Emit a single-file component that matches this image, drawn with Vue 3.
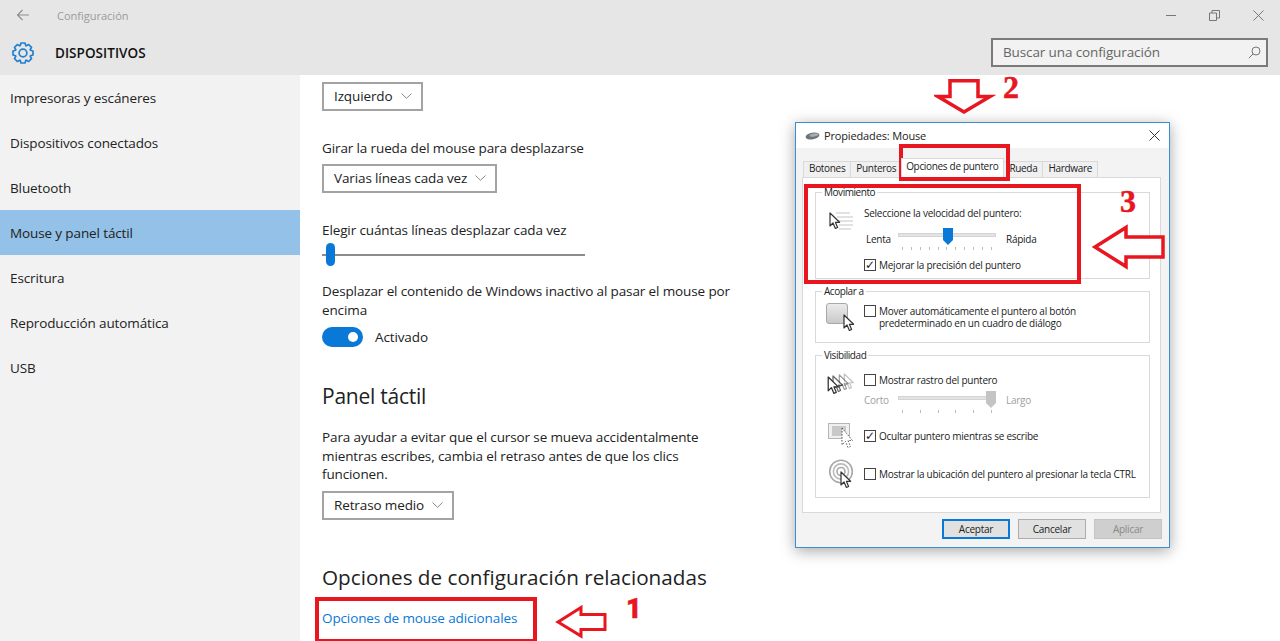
<script setup>
const rawItems = ['Impresoras y escáneres','Dispositivos conectados','Bluetooth','Mouse y panel táctil','Escritura','Reproducción automática','USB']
const tabs = ['Botones','Punteros','Opciones de puntero','Rueda','Hardware']
const ticks = Array.from({length:11},(_,i)=>i)
const ticks6 = Array.from({length:6},(_,i)=>i)
function gearPath(){
  const cx=12,cy=12,n=8,ro=10.2,ri=7.9
  let d=''
  for(let i=0;i<n;i++){
    const a=(i*2*Math.PI)/n
    const pts=[[-0.36,ri],[-0.2,ro],[0.2,ro],[0.36,ri]]
    for(const [o,r] of pts){
      const x=cx+r*Math.sin(a+o),y=cy-r*Math.cos(a+o)
      d+=(d?'L':'M')+x.toFixed(2)+' '+y.toFixed(2)
    }
  }
  return d+'Z'
}
const gear=gearPath()
</script>

<template>
  <div class="page">
    <header class="head">
      <div class="row-top">
        <svg class="back" width="14" height="12" viewBox="0 0 14 12"><path d="M13 6H1.500M6.500 1 1.500 6l5 5" fill="none" stroke="#8c8c8c" stroke-width="1.100"/></svg>
        <span class="app">Configuración</span>
        <div class="win">
          <svg width="10" height="10" viewBox="0 0 10 10"><path d="M0 5.500h10" stroke="#777" stroke-width="1"/></svg>
          <svg width="11" height="11" viewBox="0 0 11 11"><path d="M.5 3h7v7.500h-7zM3 3V.5h7.500V8H8" fill="none" stroke="#777"/></svg>
          <svg width="11" height="11" viewBox="0 0 11 11"><path d="M.5.5l10 10M10.500.5l-10 10" stroke="#777"/></svg>
        </div>
      </div>
      <div class="row-sub">
        <svg class="gear" width="24" height="24" viewBox="0 0 24 24"><path :d="gear" fill="none" stroke="#2280cf" stroke-width="1.700" stroke-linejoin="round"/><circle cx="12" cy="12" r="3.900" fill="none" stroke="#2280cf" stroke-width="1.700"/></svg>
        <span class="sect">DISPOSITIVOS</span>
        <div class="search">
          <span>Buscar una configuración</span>
          <svg width="13" height="13" viewBox="0 0 13 13"><circle cx="8" cy="5" r="4" fill="none" stroke="#777"/><path d="M5 8 .8 12.200" stroke="#777"/></svg>
        </div>
      </div>
    </header>

    <div class="body">
      <nav class="side">
        <div v-for="(it,i) in rawItems" :key="it" class="item" :class="{on:i===3}">{{ it }}</div>
      </nav>

      <main class="main">
        <div class="drop d1">Izquierdo<svg class="chev" width="11" height="6" viewBox="0 0 11 6"><path d="M.5.5 5.500 5.300 10.500.5" fill="none" stroke="#888"/></svg></div>
        <p class="lbl l1">Girar la rueda del mouse para desplazarse</p>
        <div class="drop d2">Varias líneas cada vez<svg class="chev" width="11" height="6" viewBox="0 0 11 6"><path d="M.5.5 5.500 5.300 10.500.5" fill="none" stroke="#888"/></svg></div>
        <p class="lbl l2">Elegir cuántas líneas desplazar cada vez</p>
        <div class="slider"><i class="fill"></i><i class="thumb"></i></div>
        <p class="lbl l3">Desplazar el contenido de Windows inactivo al pasar el mouse por encima</p>
        <div class="tog-row"><span class="tog"><i></i></span><span>Activado</span></div>
        <h2 class="h-panel">Panel táctil</h2>
        <p class="lbl l4">Para ayudar a evitar que el cursor se mueva accidentalmente mientras escribes, cambia el retraso antes de que los clics funcionen.</p>
        <div class="drop d3">Retraso medio<svg class="chev" width="11" height="6" viewBox="0 0 11 6"><path d="M.5.5 5.500 5.300 10.500.5" fill="none" stroke="#888"/></svg></div>
        <h2 class="h-rel">Opciones de configuración relacionadas</h2>
        <a class="link">Opciones de mouse adicionales</a>
      </main>
    </div>

    <svg width="0" height="0" class="defs">
      <symbol id="cur" viewBox="0 0 12 18"><path d="M1 1v13l3-3 2.400 5.500 2.200-1L6.400 10.300h4.200z" fill="#fff" stroke="#333" stroke-width="1.200" stroke-linejoin="round"/></symbol>
    </svg>

    <section class="dlg">
      <div class="dlg-title">
        <svg width="15" height="8" viewBox="0 0 15 8"><ellipse cx="7.500" cy="4" rx="7" ry="3.300" transform="rotate(-10 7.500 4)" fill="#6e7478"/><ellipse cx="9" cy="3" rx="4.500" ry="1.500" fill="#a8adb0" transform="rotate(-10 9 3)"/></svg>
        <span>Propiedades: Mouse</span>
        <svg class="dlg-x" width="11" height="11" viewBox="0 0 11 11"><path d="M.5.5l10 10M10.500.5l-10 10" stroke="#333"/></svg>
      </div>
      <div class="dlg-body">
        <div class="tabs">
          <span v-for="(t,i) in tabs" :key="t" class="tab" :class="{act:i===2}">{{ t }}</span>
        </div>
        <div class="panel">
          <fieldset class="fs fs-mov">
            <legend>Movimiento</legend>
            <div class="fs-grid">
              <svg class="ic" width="27" height="26" viewBox="0 0 27 26">
                <path d="M8 7h14M9 11h16M10 15h15M11 19h14M11 23h12" stroke="#c4c4c4"/>
                <use href="#cur" x="1" y="6" width="12" height="18"/>
              </svg>
              <div>
                <div class="d-txt">Seleccione la velocidad del puntero:</div>
                <div class="speed">
                  <span class="s-l">Lenta</span>
                  <div class="mini">
                    <i class="track"></i><i class="mthumb" style="left:45px"></i>
                    <div class="mticks"><i v-for="t in ticks" :key="t"></i></div>
                  </div>
                  <span>Rápida</span>
                </div>
                <label class="chk c-mov"><span class="box">✓</span>Mejorar la precisión del puntero</label>
              </div>
            </div>
          </fieldset>

          <fieldset class="fs fs-aco">
            <legend>Acoplar a</legend>
            <div class="fs-grid">
              <svg class="ic" width="30" height="32" viewBox="0 0 30 32">
                <defs><linearGradient id="btnG" x1="0" y1="0" x2="0" y2="1"><stop offset="0" stop-color="#ececec"/><stop offset="1" stop-color="#c8c8c8"/></linearGradient></defs>
                <rect x=".5" y="1.500" width="21" height="20" rx="2.500" fill="url(#btnG)" stroke="#a8a8a8"/>
                <use href="#cur" x="17" y="12" width="12" height="18"/>
              </svg>
              <label class="chk c-aco"><span class="box"></span><span>Mover automáticamente el puntero al botón<br>predeterminado en un cuadro de diálogo</span></label>
            </div>
          </fieldset>

          <fieldset class="fs fs-vis">
            <legend>Visibilidad</legend>
            <div class="vis-row r1">
              <svg class="ic" width="30" height="24" viewBox="0 0 30 24">
                <g opacity=".3"><use href="#cur" x="17" y="0" width="12" height="17"/></g>
                <g opacity=".5"><use href="#cur" x="12" y="1" width="12" height="17"/></g>
                <g opacity=".75"><use href="#cur" x="6" y="2" width="12" height="18"/></g>
                <use href="#cur" x="1" y="3" width="13" height="19"/>
              </svg>
              <div>
                <label class="chk"><span class="box"></span>Mostrar rastro del puntero</label>
                <div class="speed dim">
                  <span class="s-l2">Corto</span>
                  <div class="mini">
                    <i class="track"></i><i class="mthumb gray" style="left:88px"></i>
                    <div class="mticks"><i v-for="t in ticks6" :key="t"></i></div>
                  </div>
                  <span>Largo</span>
                </div>
              </div>
            </div>
            <div class="vis-row r2">
              <svg class="ic" width="30" height="30" viewBox="0 0 30 30">
                <rect x="2.500" y="2.500" width="21" height="15" fill="#f0f0f0" stroke="#b5b5b5"/>
                <rect x="6" y="5" width="14" height="10" fill="#c9c9c9"/>
                <path d="M16 7v17l3.500-3.500 2.500 6 2.500-1-2.500-6h4.500z" fill="#fff" stroke="#555" stroke-dasharray="1.500 1.500"/>
              </svg>
              <label class="chk"><span class="box">✓</span>Ocultar puntero mientras se escribe</label>
            </div>
            <div class="vis-row r3">
              <svg class="ic" width="30" height="34" viewBox="0 0 30 34">
                <circle cx="15" cy="14.500" r="11.300" fill="none" stroke="#a8a8a8" stroke-width="1.600"/>
                <circle cx="15" cy="14.500" r="7.600" fill="none" stroke="#bbb" stroke-width="1.600"/>
                <circle cx="15" cy="14.500" r="4" fill="none" stroke="#a8a8a8" stroke-width="1.600"/>
                <use href="#cur" x="14" y="14" width="12" height="18"/>
              </svg>
              <label class="chk"><span class="box"></span>Mostrar la ubicación del puntero al presionar la tecla CTRL</label>
            </div>
          </fieldset>
        </div>
        <div class="btns">
          <button class="btn pri">Aceptar</button>
          <button class="btn">Cancelar</button>
          <button class="btn off">Aplicar</button>
        </div>
      </div>
    </section>

    <i class="rbox b1"></i><i class="rbox b2"></i><i class="rbox b3"></i>
    <svg class="arrow a1" width="54" height="34" viewBox="0 0 54 34"><path d="M4 17 27 2.500V9.500h24v15H27V31z" fill="#fff" stroke="#e7161f" stroke-width="3"/></svg>
    <svg class="arrow a2" width="62" height="40" viewBox="0 0 62 40"><path d="M30 35 4 19.500h12V3.750h28V19.500h12z" fill="#fff" stroke="#e7161f" stroke-width="3.500"/></svg>
    <svg class="arrow a3" width="78" height="48" viewBox="0 0 78 48"><path d="M6 23 37 3.500V13h37v20H37v9.500z" fill="#fff" stroke="#e7161f" stroke-width="3.500"/></svg>
    <span class="num n1">1</span><span class="num n2">2</span><span class="num n3">3</span>
  </div>
</template>

<style>
html,body{margin:0;overflow:hidden;background:#fff}
</style>
<style scoped>
.page{position:relative;width:1280px;height:641px;overflow:hidden;font-family:"Open Sans","Noto Sans",sans-serif;font-size:13.500px;letter-spacing:-.12px;color:#222;background:#fff}
.head{height:75px;background:#e6e6e6;display:flex;flex-direction:column}
.row-top{height:30px;display:flex;align-items:center;padding-left:16px}
.back{flex:none}
.app{margin-left:27px;font-size:11px;letter-spacing:0;color:#9a9a9a}
.win{margin-left:auto;display:flex;align-items:center;gap:33px;padding-right:16px}
.row-sub{height:45px;display:flex;align-items:center;padding-left:11px}
.gear{flex:none}
.sect{margin-left:20px;font-size:13.500px;font-weight:600;letter-spacing:.05px;color:#111}
.search{margin-left:auto;margin-right:12px;width:277px;height:29px;box-sizing:border-box;border:2px solid #7a7a7a;background:#f2f2f2;display:flex;align-items:center;justify-content:space-between;padding:0 5px 1px 10px;color:#666}
.body{display:flex;height:566px}
.side{width:300px;background:#f2f2f2;box-sizing:border-box}
.item{height:45px;line-height:47px;padding-left:10px;color:#222}
.item.on{background:#93c1e8}
.main{padding-left:22px;width:440px;display:flex;flex-direction:column;align-items:flex-start}
.lbl{margin:0;line-height:18.500px;width:420px}
.drop{box-sizing:border-box;height:29px;border:2px solid #a3a3a3;display:flex;align-items:center;justify-content:space-between;padding:0 9px 0 10px}
.d1{width:101px;margin-top:7px;padding-bottom:2px}
.d2{width:175px;margin-top:6px}
.d3{width:132px;margin-top:7px}
.l1{margin-top:28px}
.l2{margin-top:28px}
.slider{position:relative;width:263px;height:23px;margin-top:4px}
.fill{position:absolute;left:0;right:0;top:11px;height:2px;background:#8c8c8c}
.thumb{position:absolute;left:4px;top:0;width:9px;height:23px;border-radius:5px;background:#0a78d7}
.l3{margin-top:16px}
.tog-row{display:flex;align-items:center;gap:12px;margin-top:8px}
.tog{width:41px;height:20px;border-radius:10px;background:#0a78d7;position:relative;display:block}
.tog i{position:absolute;right:5px;top:5px;width:10px;height:10px;border-radius:50%;background:#fff}
.h-panel{margin:34px 0 0;font-size:21px;font-weight:400;letter-spacing:-.25px;line-height:30px;color:#222}
.l4{margin-top:17px;width:410px}
.h-rel{margin:43px 0 0;font-size:20.700px;font-weight:400;letter-spacing:0;line-height:28px;color:#222}
.link{margin-top:17px;color:#0a78d7;line-height:20px}
.defs{position:absolute}
.dlg{position:absolute;left:795px;top:122px;width:375px;height:426px;box-sizing:border-box;border:1px solid #3b8fd0;background:#f0f0f0;box-shadow:0 3px 14px rgba(0,0,0,.35);display:flex;flex-direction:column;font-size:10px;letter-spacing:-.25px;color:#222}
.dlg-title{height:25px;background:#fff;display:flex;align-items:center;padding:0 9px;gap:4px;font-size:11px;letter-spacing:-.15px;flex:none}
.dlg-x{margin-left:auto}
.dlg-body{flex:1;padding:12px 8px 0 6px;display:flex;flex-direction:column;background:#f3f3f3}
.tabs{display:flex;padding-left:1px;height:17px;align-items:flex-end}
.tab{height:16px;line-height:13px;padding:0 5px;letter-spacing:-.32px;border:1px solid #d9d9d9;border-bottom:0;box-sizing:border-box;background:#f0f0f0;margin-right:-1px}
.tab.act{height:19px;line-height:14px;background:#fff;padding:0 5px 0 4px;position:relative;z-index:1}
.panel{height:336px;box-sizing:border-box;background:#fff;border:1px solid #d9d9d9;padding:8px 10px 0 12px;display:flex;flex-direction:column;gap:6px}
.fs{margin:0;padding:0;border:1px solid #d9d9d9;min-width:0}
.fs legend{margin-left:6px;padding:0 2px;line-height:13px;font-size:10px;letter-spacing:-.45px}
.fs-grid{display:flex}
.ic{flex:none;overflow:visible}
.fs-mov{height:93px;box-sizing:border-box}
.fs-mov .fs-grid{padding:7px 0 0 12px;gap:9px}
.fs-aco{height:58px;box-sizing:border-box}
.fs-aco .fs-grid{padding:4px 0 0 10px;gap:8px}
.fs-vis{height:149px;box-sizing:border-box}
.d-txt{line-height:14px}
.speed{display:flex;align-items:flex-start;margin-top:8px}
.s-l{width:34px;padding-left:2px;box-sizing:border-box;line-height:22px}
.s-l2{width:34px;line-height:18px}
.speed>span:last-child{margin-left:10px;line-height:22px}
.dim{color:#a0a0a0;margin-top:5px}
.dim>span:last-child{line-height:18px}
.mini{position:relative;width:98px;height:24px}
.track{position:absolute;left:0;right:0;top:5px;height:4px;background:#e3e3e3;border:1px solid #d4d4d4;box-sizing:border-box}
.mthumb{position:absolute;top:0;width:10px;height:17px;background:#0a78d7;clip-path:polygon(0 0,100% 0,100% 70%,50% 100%,0 70%)}
.mthumb.gray{background:#c4c4c4}
.mticks{position:absolute;left:4px;right:4px;top:19px;display:flex;justify-content:space-between}
.mticks i{width:1px;height:3px;background:#bbb}
.chk{display:flex;align-items:flex-start;gap:3px;line-height:12px}
.c-mov{margin-top:7px}
.c-aco{margin-top:3px}
.box{flex:none;width:12px;height:12px;box-sizing:border-box;border:1px solid #444;background:#fff;font-size:12px;line-height:10px;text-align:center;color:#222;font-family:"DejaVu Sans",sans-serif}
.vis-row{display:grid;grid-template-columns:30px 1fr;column-gap:8px;padding-left:10px}
.r1{margin-top:12px;height:46px}
.r1 .ic{margin-top:-1px}
.r2{height:31px;align-items:center}
.r3{height:46px;align-items:center}
.btns{display:flex;justify-content:flex-end;gap:8px;padding:6px 0 0;margin-right:-1px}
.btn{width:68px;height:20px;padding:0;font:inherit;letter-spacing:inherit;border:1px solid #adadad;background:#e1e1e1;color:#222}
.pri{border:2px solid #0a78d7}
.off{background:#cfcfcf;border-color:#c4c4c4;color:#8a8a8a}
.rbox{position:absolute;box-sizing:border-box;border:4px solid #e7161f}
.b1{left:315px;top:597px;width:222px;height:46px}
.b2{left:899px;top:144px;width:111px;height:37px}
.b3{left:804px;top:184px;width:277px;height:100px}
.arrow{position:absolute}
.a1{left:554px;top:605px}
.a2{left:934px;top:77px}
.a3{left:1089px;top:224px}
.num{position:absolute;color:#e7161f;line-height:1;-webkit-text-stroke:.5px #e7161f}
.n1{left:626px;top:593px;font:900 27px Roboto,sans-serif}
.n2{left:1003px;top:69px;font:700 32px "Liberation Serif",serif}
.n3{left:1120px;top:183px;font:700 32px "Liberation Serif",serif}
</style>
